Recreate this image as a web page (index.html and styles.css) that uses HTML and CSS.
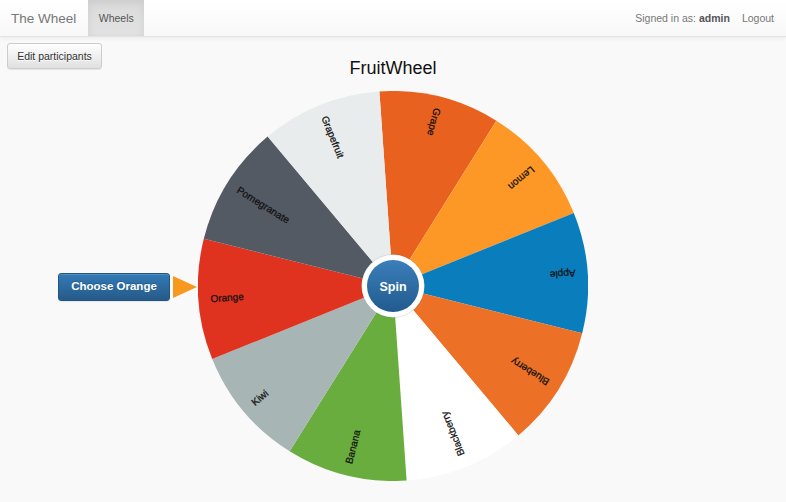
FILE: index.html
```html
<!DOCTYPE html>
<html lang="en">
<head>
<meta charset="utf-8">
<title>The Wheel</title>
<link rel="stylesheet" href="styles.css">
</head>
<body>
<nav class="navbar">
  <div class="nav-left">
    <a class="brand" href="#">The Wheel</a>
    <a class="nav-link active" href="#">Wheels</a>
  </div>
  <div class="nav-right">
    <span class="nav-text">Signed in as: <b>admin</b></span>
    <a class="nav-link logout" href="#">Logout</a>
  </div>
</nav>
<main class="page">
  <div class="top-row">
    <button class="btn btn-default">Edit participants</button>
    <h1 class="title">FruitWheel</h1>
  </div>
  <div class="wheel-row">
    <div class="chooser">
      <button class="btn btn-primary">Choose Orange</button>
      <span class="pointer"></span>
    </div>
    <svg class="wheel" width="390" height="390" viewBox="-195 -195 390 390">
      <defs>
        <linearGradient id="spinGrad" x1="0" y1="0" x2="0" y2="1">
          <stop offset="0" stop-color="#3b7eba"/>
          <stop offset="1" stop-color="#225b8e"/>
        </linearGradient>
      </defs>
      <path d="M0 0L-13.60 -194.52A195 195 0 0 1 103.33 -165.37Z" fill="#e8611f"/>
      <path d="M0 0L103.33 -165.37A195 195 0 0 1 180.80 -73.05Z" fill="#fd9827"/>
      <path d="M0 0L180.80 -73.05A195 195 0 0 1 189.21 47.17Z" fill="#0a7dbc"/>
      <path d="M0 0L189.21 47.17A195 195 0 0 1 125.34 149.38Z" fill="#ec7127"/>
      <path d="M0 0L125.34 149.38A195 195 0 0 1 13.60 194.52Z" fill="#ffffff"/>
      <path d="M0 0L13.60 194.52A195 195 0 0 1 -103.33 165.37Z" fill="#6aad3f"/>
      <path d="M0 0L-103.33 165.37A195 195 0 0 1 -180.80 73.05Z" fill="#a8b5b5"/>
      <path d="M0 0L-180.80 73.05A195 195 0 0 1 -189.21 -47.17Z" fill="#df3320"/>
      <path d="M0 0L-189.21 -47.17A195 195 0 0 1 -125.34 -149.38Z" fill="#545a64"/>
      <path d="M0 0L-125.34 -149.38A195 195 0 0 1 -13.60 -194.52Z" fill="#e9ecec"/>
      <g class="labels">
        <text transform="rotate(14) translate(0,-183) rotate(90)">Grape</text>
        <text transform="rotate(50) translate(0,-183) rotate(90)">Lemon</text>
        <text transform="rotate(86) translate(0,-183) rotate(90)">Apple</text>
        <text transform="rotate(122) translate(0,-183) rotate(90)">Blueberry</text>
        <text transform="rotate(158) translate(0,-183) rotate(90)">Blackberry</text>
        <text transform="rotate(194) translate(0,-183) rotate(90)">Banana</text>
        <text transform="rotate(230) translate(0,-183) rotate(90)">Kiwi</text>
        <text transform="rotate(266) translate(0,-183) rotate(90)">Orange</text>
        <text transform="rotate(302) translate(0,-183) rotate(90)">Pomegranate</text>
        <text transform="rotate(338) translate(0,-183) rotate(90)">Grapefruit</text>
      </g>
      <g class="spin">
        <circle r="31.5" fill="#ffffff" stroke="rgba(0,0,0,0.10)" stroke-width="1"/>
        <circle r="26" fill="url(#spinGrad)"/>
        <text class="spin-text" x="0" y="1">Spin</text>
      </g>
    </svg>
    <div class="spacer"></div>
  </div>
</main>
</body>
</html>
```

FILE: styles.css
```css
* { box-sizing: border-box; }

html, body {
  margin: 0;
  padding: 0;
  background: #f9f9f9;
  font-family: "Liberation Sans", Arial, Helvetica, sans-serif;
  color: #333;
}

.navbar {
  height: 37px;
  display: flex;
  justify-content: space-between;
  align-items: stretch;
  background: linear-gradient(#ffffff, #f8f8f8);
  border-bottom: 1px solid #e4e4e4;
  box-shadow: 0 1px 4px rgba(0, 0, 0, 0.07);
}

.nav-left, .nav-right {
  display: flex;
  align-items: stretch;
}

.brand {
  display: flex;
  align-items: center;
  padding: 0 12px 0 11px;
  font-size: 13.5px;
  color: #777;
  text-decoration: none;
}

.nav-link {
  display: flex;
  align-items: center;
  padding: 0 11px 0 10px;
  font-size: 10.5px;
  color: #777;
  text-decoration: none;
}

.nav-link.active {
  color: #555;
  background: linear-gradient(#dbdbdb, #e2e2e2);
  box-shadow: inset 0 3px 9px rgba(0, 0, 0, 0.075);
  width: 56px;
  justify-content: center;
  padding: 0;
}

.nav-text {
  display: flex;
  align-items: center;
  font-size: 10.5px;
  color: #777;
  margin-right: 1px;
}

.nav-text b {
  color: #555;
  margin-left: 3px;
}

.logout {
  padding: 0 12px 0 11px;
}

.page {
  padding: 6px 7px 0;
}

.top-row {
  display: grid;
  grid-template-columns: 1fr auto 1fr;
  align-items: start;
}

.btn {
  font-family: "Liberation Sans", Arial, Helvetica, sans-serif;
  border-radius: 3px;
  cursor: pointer;
  line-height: 1;
}

.btn-default {
  justify-self: start;
  height: 26px;
  width: 95px;
  padding: 0;
  font-size: 10.5px;
  color: #333;
  background: linear-gradient(#ffffff, #e0e0e0);
  border: 1px solid #cccccc;
  text-shadow: 0 1px 0 #fff;
  box-shadow: inset 0 1px 0 rgba(255, 255, 255, 0.15), 0 1px 1px rgba(0, 0, 0, 0.075);
}

.title {
  margin: 15px 0 0;
  font-size: 18px;
  line-height: 20px;
  font-weight: normal;
  color: #111;
}

.wheel-row {
  margin-top: 13px;
  display: grid;
  grid-template-columns: 1fr 390px 1fr;
  align-items: center;
}

.chooser {
  display: flex;
  justify-content: flex-end;
  align-items: center;
  gap: 3px;
  padding-right: 1px;
  padding-top: 2px;
}

.btn-primary {
  height: 28px;
  width: 112px;
  padding: 0;
  font-size: 11.5px;
  font-weight: bold;
  color: #fff;
  background: linear-gradient(#337ab7, #265a88);
  border: 1px solid #245580;
  text-shadow: 0 -1px 0 rgba(0, 0, 0, 0.2);
  box-shadow: inset 0 1px 0 rgba(255, 255, 255, 0.15), 0 1px 1px rgba(0, 0, 0, 0.075);
}

.pointer {
  width: 0;
  height: 0;
  border-left: 24px solid #f8991f;
  border-top: 11.5px solid transparent;
  border-bottom: 11.5px solid transparent;
}

.wheel {
  display: block;
}

.labels text {
  font-family: "Liberation Sans", Arial, Helvetica, sans-serif;
  font-size: 10px;
  fill: #111;
  stroke: #111;
  stroke-width: 0.25px;
  dominant-baseline: central;
}

.spin-text {
  font-family: "Liberation Sans", Arial, Helvetica, sans-serif;
  font-size: 12.5px;
  font-weight: bold;
  fill: #fff;
  text-anchor: middle;
  dominant-baseline: central;
}
```
